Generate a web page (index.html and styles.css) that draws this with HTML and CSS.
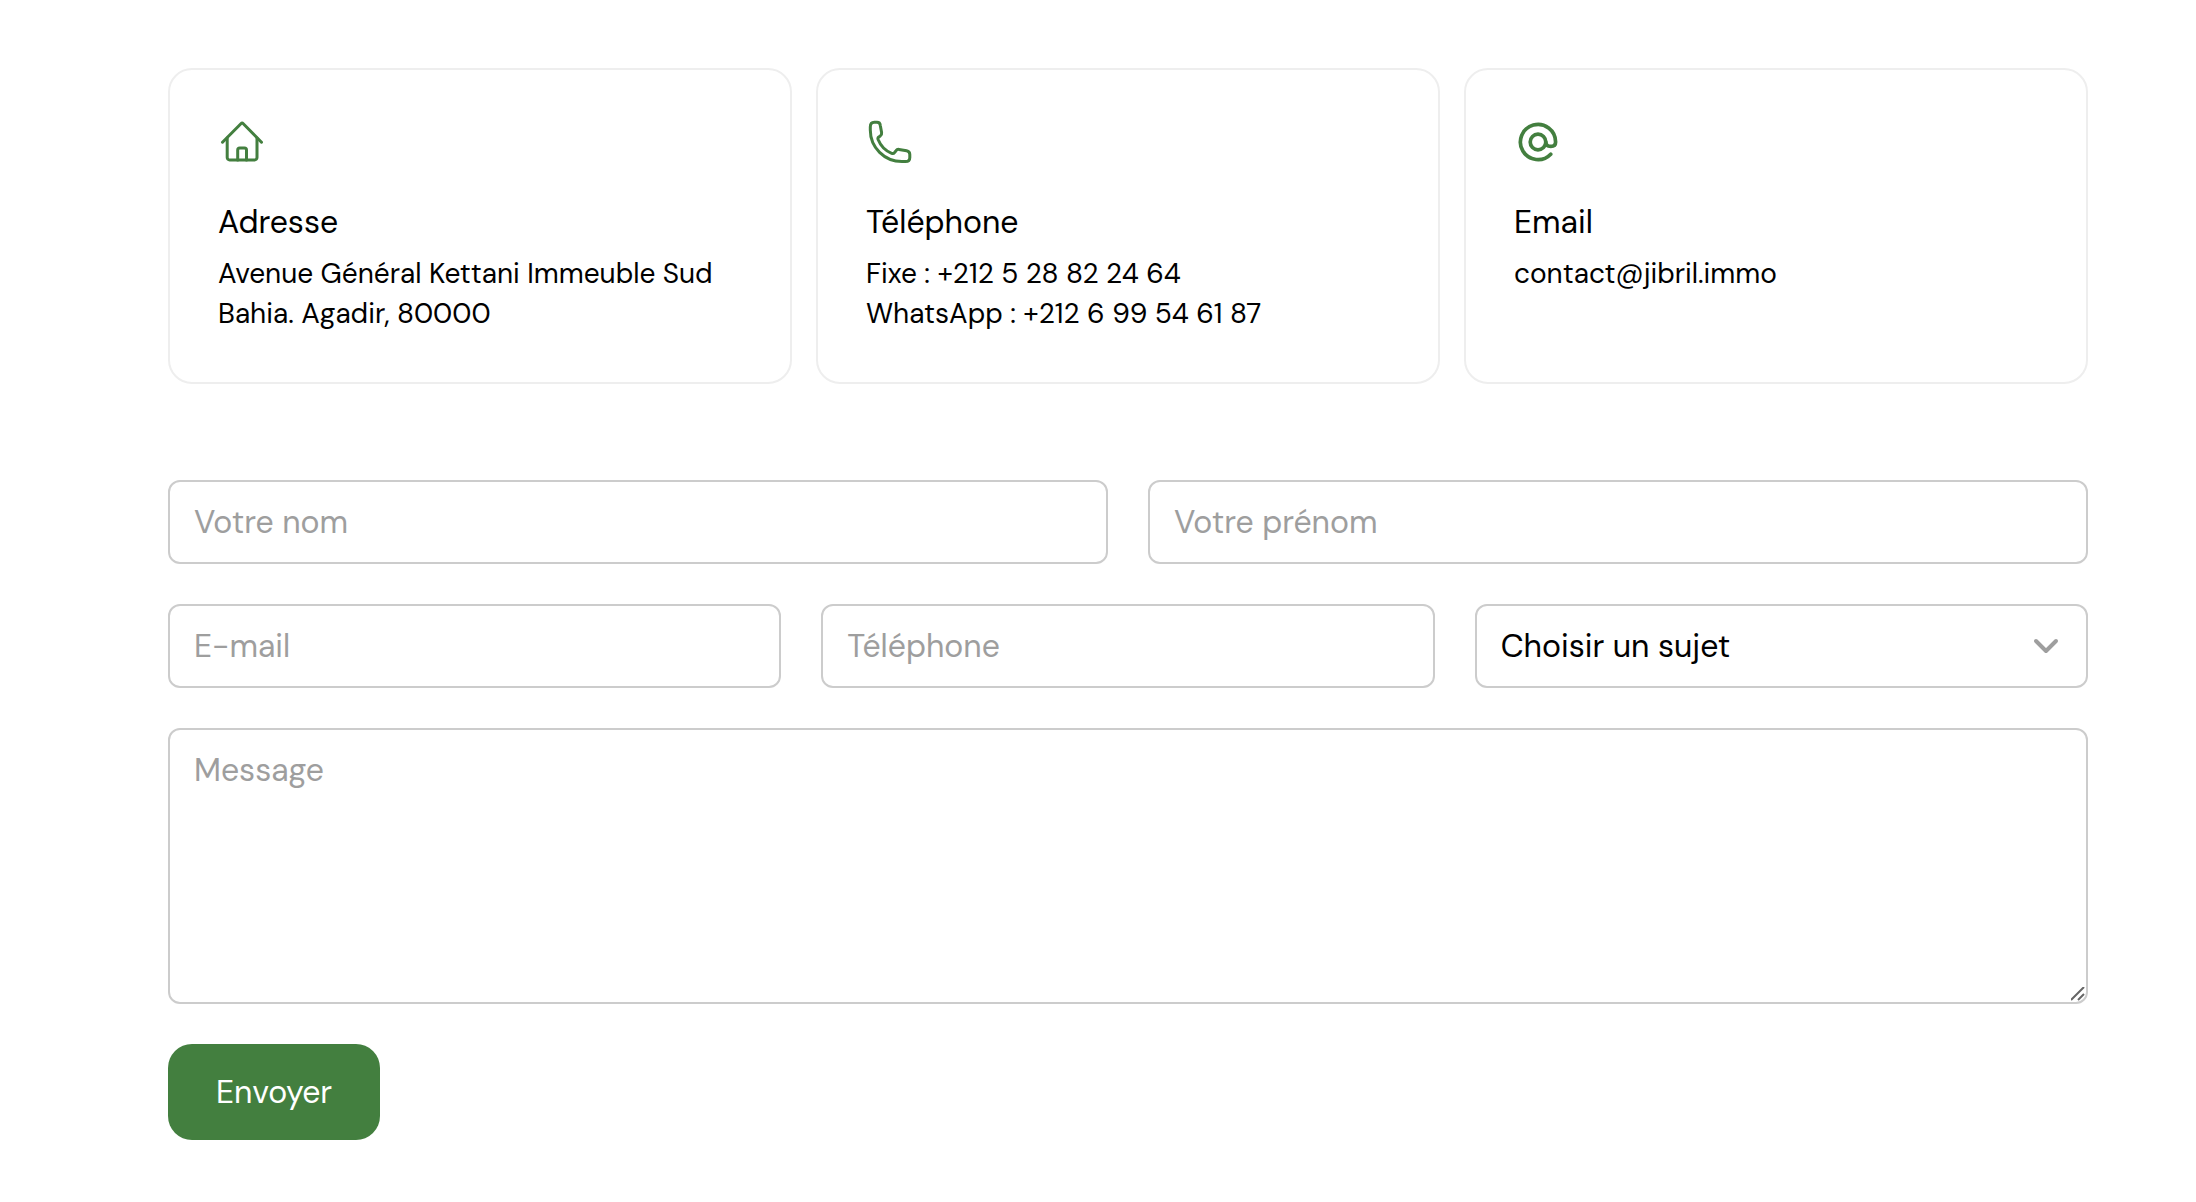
FILE: index.html
```html
<!DOCTYPE html>
<html lang="fr">
<head>
  <meta charset="utf-8">
  <meta name="viewport" content="width=device-width, initial-scale=1">
  <title>Contact</title>
  <link rel="stylesheet" href="styles.css">
</head>
<body>
  <main class="contact">
    <section class="cards" aria-label="Coordonnées">
      <article class="card">
        <svg class="card-icon" viewBox="0 0 48 48" aria-hidden="true">
          <path d="M4.5 24.2 L22.9 5.7 a1.7 1.7 0 0 1 2.4 0 L43.5 24.2"/>
          <path d="M9.2 20 V39.6 a2.4 2.4 0 0 0 2.4 2.4 H36.6 a2.4 2.4 0 0 0 2.4 -2.4 V20"/>
          <path d="M19.7 42 V32 a2 2 0 0 1 2 -2 H26.5 a2 2 0 0 1 2 2 V42"/>
        </svg>
        <h2 class="card-title">Adresse</h2>
        <p class="card-text">Avenue Général Kettani Immeuble Sud Bahia. Agadir, 80000</p>
      </article>
      <article class="card">
        <svg class="card-icon" viewBox="0 0 48 48" aria-hidden="true">
          <path d="M4.3 9 C4.3 6 5.8 4.3 8.3 4.3 H11 C13 4.3 14.1 5.4 14.3 7.4 L15.6 14.6 C15.9 16.2 15.5 17 14.3 17.9 L12.8 18.9 C11.8 19.6 11.7 20.4 12.1 21.5 C14.6 27.8 19.4 32.8 25.7 35.3 C26.9 35.8 27.8 35.5 28.5 34.6 L30 32.7 C30.8 31.6 31.7 31.2 33 31.4 L40.6 32.8 C42.6 33.2 43.8 34.4 43.8 36.4 V39.4 C43.8 41.9 42.1 43.5 39.5 43.5 H36 C18.5 43.5 4.3 29.5 4.3 12 Z"/>
        </svg>
        <h2 class="card-title">Téléphone</h2>
        <p class="card-text">Fixe : +212 5 28 82 24 64<br>WhatsApp : +212 6 99 54 61 87</p>
      </article>
      <article class="card">
        <svg class="card-icon" viewBox="0 0 48 48" aria-hidden="true">
          <g stroke-width="3.7">
            <circle cx="24" cy="24" r="7.8"/>
            <path d="M31.8 24 C31.8 27 34 28.4 36.8 28.4 C40 28.4 41.6 26.8 41.6 24 A17.6 17.6 0 1 0 36.7 36.2"/>
          </g>
        </svg>
        <h2 class="card-title">Email</h2>
        <p class="card-text">contact@jibril.immo</p>
      </article>
    </section>

    <form class="form">
      <div class="row row-two">
        <input class="field" type="text" name="nom" placeholder="Votre nom" aria-label="Votre nom">
        <input class="field" type="text" name="prenom" placeholder="Votre prénom" aria-label="Votre prénom">
      </div>
      <div class="row row-three">
        <input class="field" type="email" name="email" placeholder="E-mail" aria-label="E-mail">
        <input class="field" type="tel" name="telephone" placeholder="Téléphone" aria-label="Téléphone">
        <select class="field field-select" name="sujet" aria-label="Sujet">
          <option>Choisir un sujet</option>
        </select>
      </div>
      <textarea class="field field-message" name="message" placeholder="Message" aria-label="Message"></textarea>
      <button class="submit" type="submit">Envoyer</button>
    </form>
  </main>
</body>
</html>
```
FILE: styles.css
```css
:root {
  --green: #437f3f;
  --card-border: #eee;
  --field-border: #ccc;
  --muted: #9e9e9e;
}

*,
*::before,
*::after {
  box-sizing: border-box;
}

body {
  margin: 0;
  background: #fff;
  color: #000;
  font-family: "DM Sans", Inter, "Liberation Sans", sans-serif;
  font-size: 28px;
  line-height: 40px;
}

.contact {
  display: flex;
  flex-direction: column;
  gap: 96px;
  padding: 68px 108px 60px 168px;
}

.cards {
  display: grid;
  grid-template-columns: repeat(3, minmax(0, 1fr));
  gap: 24px;
}

.card {
  padding: 48px;
  border: 2px solid var(--card-border);
  border-radius: 24px;
}

.card-icon {
  display: block;
  width: 48px;
  height: 48px;
  margin-bottom: 32px;
  fill: none;
  stroke: var(--green);
  stroke-width: 3;
  stroke-linecap: round;
  stroke-linejoin: round;
}

.card-title {
  margin: 0 0 8px;
  font-size: 32px;
  font-weight: 400;
  line-height: 48px;
}

.card-text {
  margin: 0;
}

.form {
  display: flex;
  flex-direction: column;
  align-items: flex-start;
  gap: 40px;
}

.row {
  display: grid;
  gap: 40px;
  width: 100%;
}

.row-two {
  grid-template-columns: repeat(2, minmax(0, 1fr));
}

.row-three {
  grid-template-columns: repeat(3, minmax(0, 1fr));
}

.field {
  display: block;
  width: 100%;
  height: 84px;
  margin: 0;
  padding: 16px 24px;
  border: 2px solid var(--field-border);
  border-radius: 12px;
  background: #fff;
  color: #000;
  font: inherit;
  font-size: 32px;
  line-height: 48px;
}

.field::placeholder {
  color: var(--muted);
  opacity: 1;
}

.field-select {
  appearance: none;
  background: #fff url("data:image/svg+xml,%3Csvg xmlns='http://www.w3.org/2000/svg' viewBox='0 0 32 32' fill='none' stroke='%239e9e9e' stroke-width='4' stroke-linecap='round' stroke-linejoin='round'%3E%3Cpath d='M6 11l10 10 10-10'/%3E%3C/svg%3E") no-repeat right 24px center / 32px 32px;
}

.field-message {
  height: 276px;
  resize: vertical;
}

.field-message::-webkit-resizer {
  background: url("data:image/svg+xml,%3Csvg xmlns='http://www.w3.org/2000/svg' viewBox='0 0 15 15' fill='none' stroke='%23666' stroke-width='2'%3E%3Cpath d='M0 13L13 0M7 13l6-6'/%3E%3C/svg%3E") no-repeat center / 15px 15px;
}

.submit {
  padding: 24px 48px;
  border: 0;
  border-radius: 24px;
  background: var(--green);
  color: #fff;
  font: inherit;
  font-size: 32px;
  line-height: 48px;
}

@media (max-width: 1100px) {
  .contact {
    padding: 40px 24px;
    gap: 48px;
  }

  .cards,
  .row-two,
  .row-three {
    grid-template-columns: 1fr;
  }
}
```
